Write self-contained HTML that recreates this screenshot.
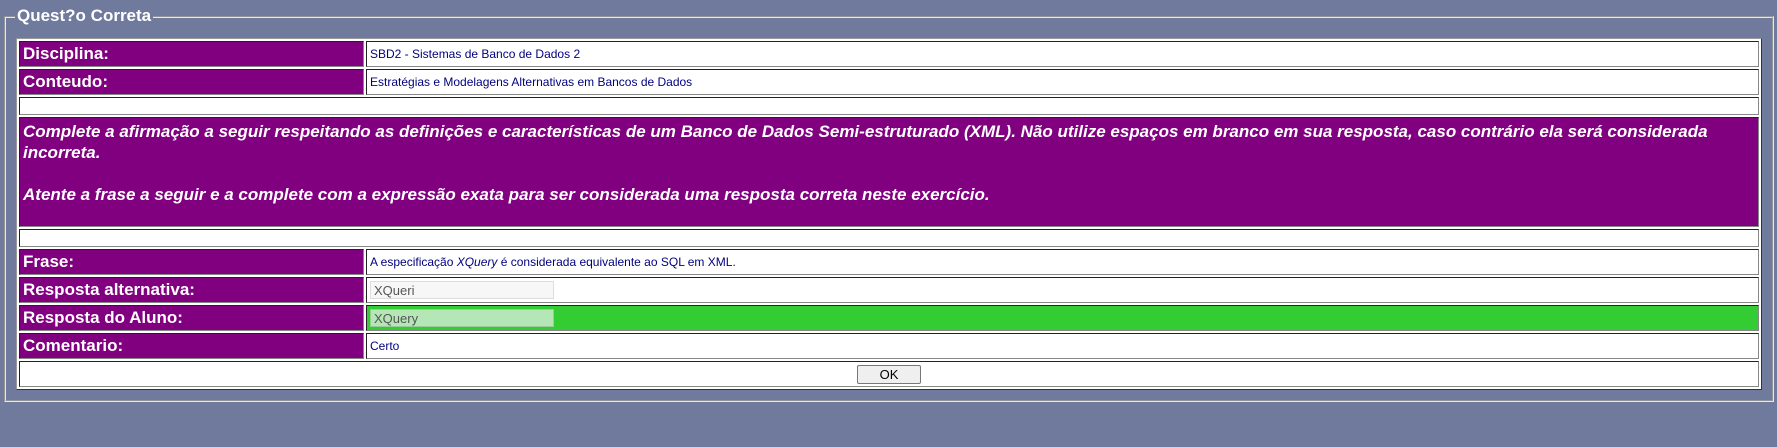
<!DOCTYPE html>
<html><head><meta charset="utf-8"><style>
html,body{margin:0;padding:0;width:1777px;height:447px;overflow:hidden;background:#6f7a9d;font-family:"Liberation Sans",Arial,sans-serif;}
.fs{position:absolute;left:4px;top:16px;width:1770px;height:386px;box-sizing:border-box;border:2px groove #e8e8e8;}
.lg{position:absolute;left:15px;top:6px;background:#6f7a9d;color:#fff;font-weight:bold;font-size:17px;padding:0 2px;line-height:20px;}
table{position:absolute;left:16px;top:38px;width:1746px;border-collapse:separate;border-spacing:2px;border:1px solid;border-color:#999 #333 #333 #999;background:#fff;}
td{border:1px solid;border-color:#222 #888 #888 #222;padding:0 3px;box-sizing:border-box;background:#fff;}
td.l{background:#800080;color:#fff;font-weight:bold;font-size:17px;width:345px;height:26px;}
td.v{font-size:12px;color:#000080;}
td.e{height:18px;}
td.big{background:#800080;color:#fff;font-weight:bold;font-style:italic;font-size:17px;height:110px;vertical-align:top;padding:3px 3px;line-height:21px;}
.in{display:inline-block;width:184px;height:18px;border:1px solid #ddd;background:#f7f7f7;color:#555;font-size:13px;line-height:18px;padding-left:3px;box-sizing:border-box;vertical-align:middle}
td.g{background:#33cc33;}
.g .in{background:#b5e6b5;border-color:#9c9}
.ok{display:inline-block;width:64px;height:19px;border:1px solid #777;border-radius:2px;background:#efefef;font-size:13px;line-height:17px;text-align:center;box-sizing:border-box;color:#000}
</style></head><body>
<div class="fs"></div>
<div class="lg">Quest?o Correta</div>
<table>
<tr><td class="l">Disciplina:</td><td class="v">SBD2 - Sistemas de Banco de Dados 2</td></tr>
<tr><td class="l">Conteudo:</td><td class="v">Estratégias e Modelagens Alternativas em Bancos de Dados</td></tr>
<tr><td class="e" colspan="2"></td></tr>
<tr><td class="big" colspan="2">Complete a afirmação a seguir respeitando as definições e características de um Banco de Dados Semi-estruturado (XML). Não utilize espaços em branco em sua resposta, caso contrário ela será considerada incorreta.<br><br>Atente a frase a seguir e a complete com a expressão exata para ser considerada uma resposta correta neste exercício.</td></tr>
<tr><td class="e" colspan="2"></td></tr>
<tr><td class="l">Frase:</td><td class="v">A especificação <i>XQuery</i> é considerada equivalente ao SQL em XML.</td></tr>
<tr><td class="l">Resposta alternativa:</td><td class="v"><span class="in">XQueri</span></td></tr>
<tr><td class="l">Resposta do Aluno:</td><td class="v g"><span class="in">XQuery</span></td></tr>
<tr><td class="l">Comentario:</td><td class="v">Certo</td></tr>
<tr><td colspan="2" style="height:26px;text-align:center;padding:0"><span class="ok">OK</span></td></tr>
</table>
</body></html>
